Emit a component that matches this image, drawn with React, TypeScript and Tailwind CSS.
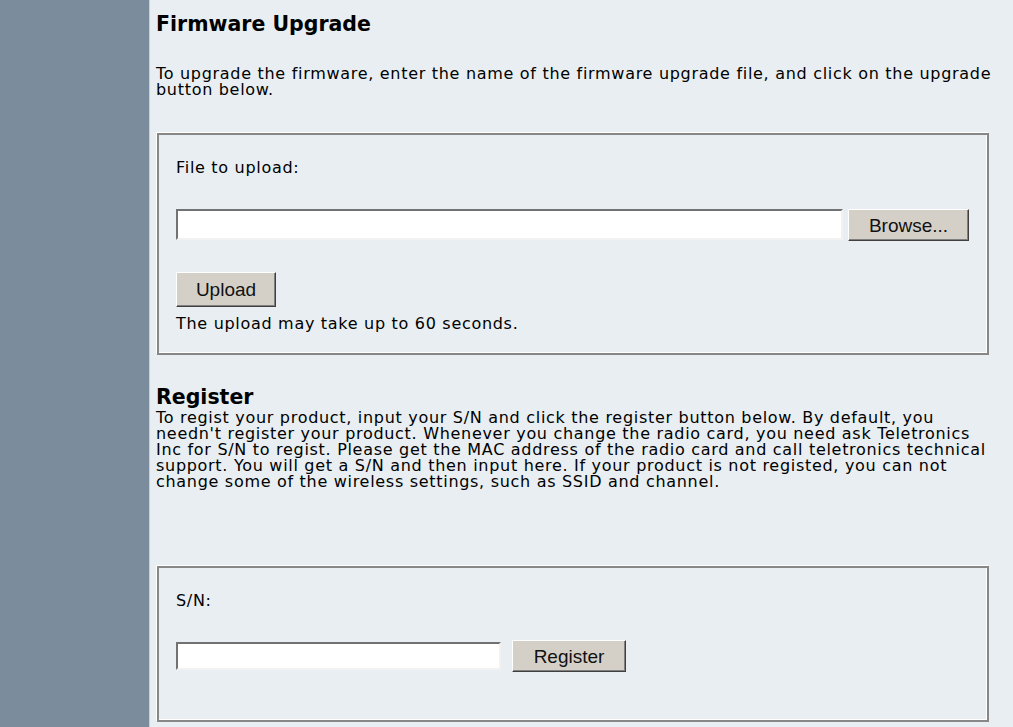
import { ReactNode } from "react";

type BoxProps = {
  children: ReactNode;
  className?: string;
};

function GrooveBox({ children, className }: BoxProps) {
  return (
    <div
      className={`ml-[1px] w-[832px] border-2 border-[#878787] shadow-[-1px_-1px_0_#ffffff,inset_-1px_-1px_0_#ffffff] pl-[17px] ${className ?? ""}`}
    >
      {children}
    </div>
  );
}

function TextInput({ width, height }: { width: string; height: string }) {
  return (
    <input
      type="text"
      className={`${width} ${height} bg-white border-2 border-t-[#727272] border-l-[#727272] border-b-[#f2f2f2] border-r-[#f2f2f2] outline-none px-1`}
    />
  );
}

function ClassicButton({
  label,
  className,
}: {
  label: string;
  className: string;
}) {
  return (
    <button
      type="button"
      className={`${className} bg-[#d4d0c8] border border-t-[#ffffff] border-l-[#ffffff] border-b-[#404040] border-r-[#404040] shadow-[inset_-1px_-1px_0_#808080] font-['Liberation_Sans',Arial,sans-serif] text-[19px] leading-none tracking-normal text-[#111]`}
    >
      {label}
    </button>
  );
}

export default function App() {
  return (
    <div className="flex h-[727px] overflow-hidden font-['DejaVu_Sans',Verdana,sans-serif] text-black">
      <div className="w-[150px] shrink-0 bg-[#7b8c9c] border-r border-[#c3cfd9]" />

      <div className="flex-1 bg-[#e8eef1] pl-[6px] pr-[17px] text-[16px] leading-[16px] tracking-[0.7px]">
        <h2 className="pt-[12px] text-[20.5px] leading-[24px] font-bold tracking-normal">
          Firmware Upgrade
        </h2>
        <p className="mt-[30px]">
          To upgrade the firmware, enter the name of the firmware upgrade file,
          and click on the upgrade button below.
        </p>

        <GrooveBox className="mt-[35px] pt-[25px] pb-[21px]">
          <div>File to upload:</div>
          <div className="mt-[33px] flex items-start">
            <TextInput width="w-[667px]" height="h-[31px]" />
            <ClassicButton label="Browse..." className="ml-[5px] w-[121px] h-[32px]" />
          </div>
          <ClassicButton label="Upload" className="mt-[31px] w-[100px] h-[35px]" />
          <div className="mt-[9px]">The upload may take up to 60 seconds.</div>
        </GrooveBox>

        <h2 className="mt-[30px] text-[20.5px] leading-[24px] font-bold tracking-normal">
          Register
        </h2>
        <p className="mt-[1px]">
          To regist your product, input your S/N and click the register button
          below. By default, you needn't register your product. Whenever you
          change the radio card, you need ask Teletronics Inc for S/N to regist.
          Please get the MAC address of the radio card and call teletronics
          technical support. You will get a S/N and then input here. If your
          product is not registed, you can not change some of the wireless
          settings, such as SSID and channel.
        </p>

        <GrooveBox className="mt-[76px] pt-[25px] pb-[48px]">
          <div>S/N:</div>
          <div className="mt-[31px] flex items-center">
            <TextInput width="w-[325px]" height="h-[28px]" />
            <ClassicButton label="Register" className="ml-[11px] w-[114px] h-[32px]" />
          </div>
        </GrooveBox>
      </div>
    </div>
  );
}
